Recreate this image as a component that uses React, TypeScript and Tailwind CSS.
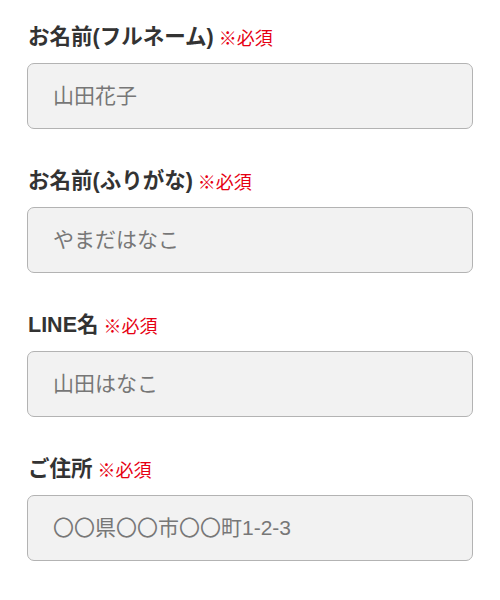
import React from "react";

const fields = [
  { label: "お名前(フルネーム)", placeholder: "山田花子" },
  { label: "お名前(ふりがな)", placeholder: "やまだはなこ" },
  { label: "LINE名", placeholder: "山田はなこ" },
  { label: "ご住所", placeholder: "〇〇県〇〇市〇〇町1-2-3" },
];

export default function App() {
  return (
    <div
      className="w-[500px] h-[600px] bg-white pl-[27px] pr-[27px] pt-[22px]"
      style={{ fontFamily: '"Liberation Sans", "Noto Sans CJK JP", sans-serif' }}
    >
      {fields.map((f) => (
        <div key={f.label} className="mb-[37px]">
          <div className="flex items-end h-[30px] leading-[30px] pl-[1px]">
            <span className="text-[21.5px] font-bold text-[#333333]">{f.label}</span>
            <span className="ml-[5px] text-[18px] text-[#e60012] leading-[25px]">※必須</span>
          </div>
          <input
            className="mt-[11px] block w-[446px] h-[66px] rounded-[7px] border border-[#b3b3b3] bg-[#f2f2f2] pl-[25px] text-[21px] text-[#333] placeholder:text-[#777777] outline-none"
            placeholder={f.placeholder}
          />
        </div>
      ))}
    </div>
  );
}
